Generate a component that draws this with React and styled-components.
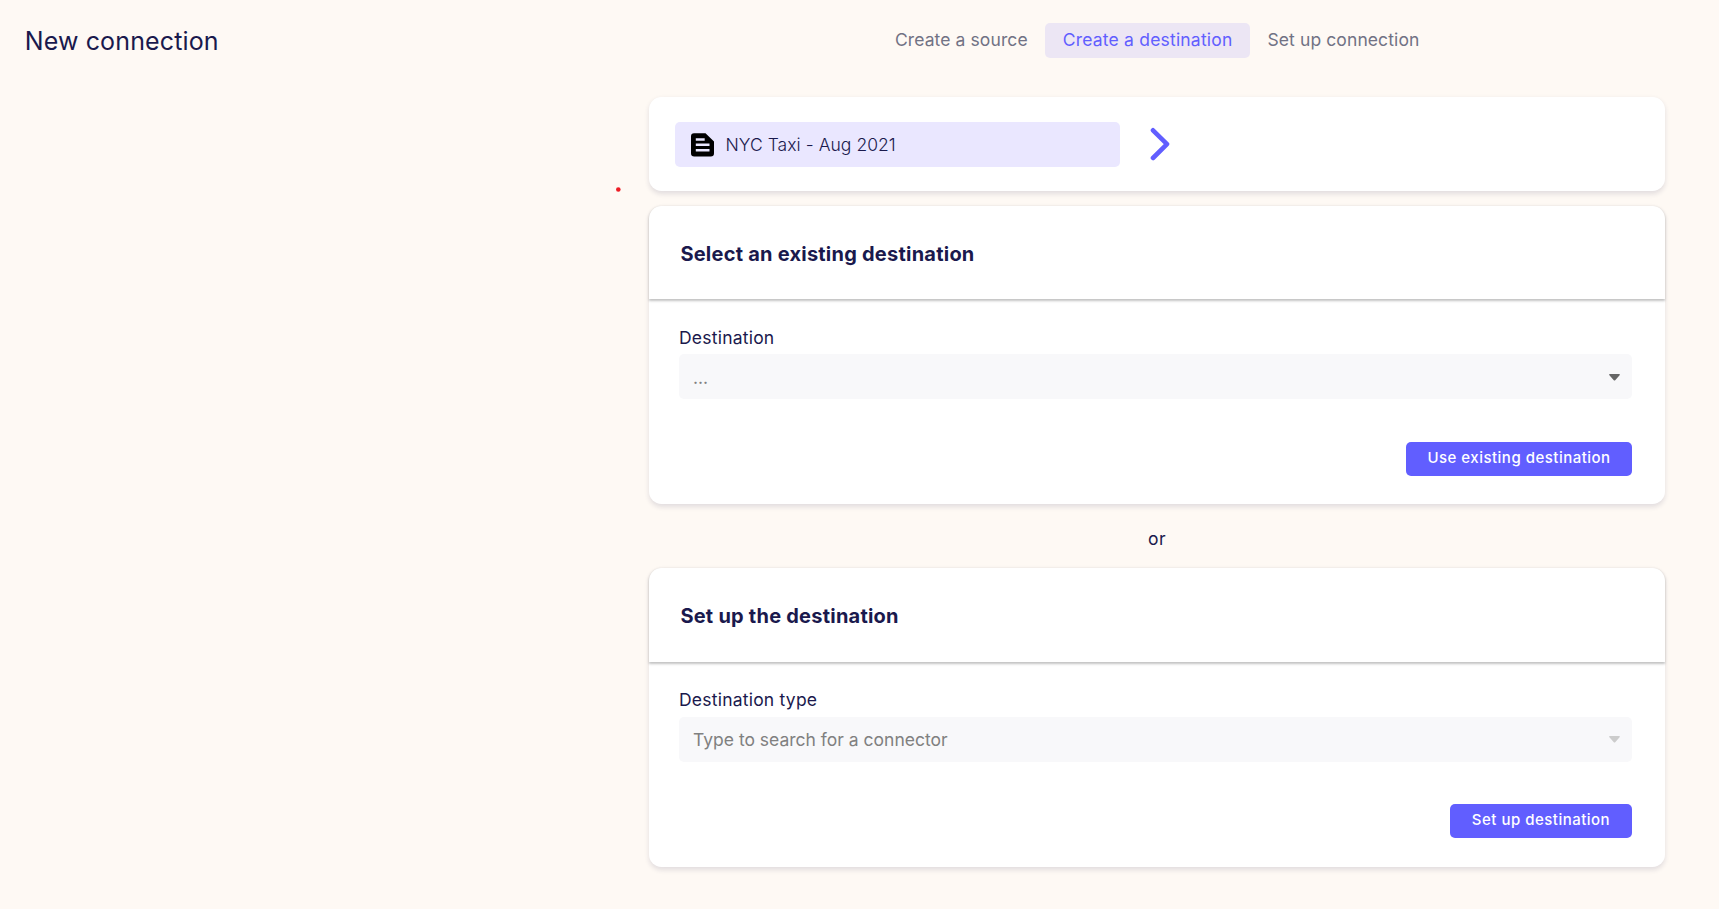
import React from "react";
import styled, { createGlobalStyle } from "styled-components";

const GlobalStyle = createGlobalStyle`
  * { box-sizing: border-box; }
  body {
    margin: 0;
    background: #fef9f4;
    color: #1a194d;
    font-family: Inter, "Liberation Sans", sans-serif;
    font-size: 17.5px;
  }
`;

const Page = styled.div`
  position: relative;
  height: 909px;
  overflow: hidden;
  display: flex;
  flex-direction: column;
`;

const Header = styled.header`
  display: flex;
  align-items: flex-start;
  height: 97px;
  padding-top: 23px;
  padding-left: 24.7px;
`;

const Title = styled.h1`
  width: 624.3px;
  margin: 2px 0 0;
  font-size: 25px;
  line-height: 32px;
  font-weight: 400;
  letter-spacing: 0.14px;
`;

const Steps = styled.nav`
  width: 1016px;
  display: flex;
  justify-content: center;
`;

const Step = styled.div`
  height: 35px;
  padding: 0 17.3px 0 17.7px;
  border-radius: 5px;
  line-height: 34px;
  white-space: nowrap;
  letter-spacing: ${(p) => (p.$active ? 0.2 : 0.1)}px;
  color: ${(p) => (p.$active ? "#615eff" : "#717284")};
  background: ${(p) => (p.$active ? "#ece6f4" : "transparent")};
`;

const Content = styled.main`
  width: 1016px;
  margin-left: 649px;
  display: flex;
  flex-direction: column;
`;

const Card = styled.section`
  height: 298.4px;
  background: #fff;
  border-radius: 12.5px;
  box-shadow: 0 2.5px 5px rgba(26, 25, 77, 0.12);
`;

const SourceCard = styled(Card)`
  display: flex;
  align-items: center;
  height: 94px;
  padding: 1px 26px 0;
  margin-bottom: 14.8px;
`;

const SourceItem = styled.div`
  display: flex;
  align-items: center;
  width: 445px;
  height: 45px;
  padding-left: 12px;
  gap: 8.5px;
  border-radius: 5px;
  background: #eae7ff;
  font-weight: 300;
  letter-spacing: 0.05px;
`;

const Chevron = styled.svg`
  margin-left: 30px;
  margin-top: -1px;
`;

const CardHeader = styled.div`
  height: 93.4px;
  padding: 2.4px 0 0 31.4px;
  display: flex;
  align-items: center;
  border-radius: 12.5px 12.5px 0 0;
  box-shadow: 0 1.25px 2.5px rgba(0, 0, 0, 0.24);
`;

const CardTitle = styled.h2`
  margin: 0;
  font-size: 20px;
  line-height: 24px;
  font-weight: 650;
  letter-spacing: 0.23px;
`;

const CardBody = styled.div`
  display: flex;
  flex-direction: column;
  padding: 27.6px 33px 0 30px;
`;

const Label = styled.label`
  line-height: 22px;
  margin-bottom: 5.4px;
  letter-spacing: 0.22px;
`;

const Select = styled.div`
  display: flex;
  align-items: center;
  justify-content: space-between;
  height: 45px;
  padding: 1.6px 12px 0 14px;
  border-radius: 5px;
  background: #f8f8fa;
  color: #808080;
`;

const Button = styled.button`
  align-self: flex-end;
  height: 34px;
  width: ${(p) => p.$width}px;
  margin: 42.8px 0 0;
  padding: 0 0 2.8px;
  border: 0;
  border-radius: 5px;
  background: #615eff;
  color: #fff;
  font-family: inherit;
  font-size: 15px;
  font-weight: 500;
  letter-spacing: 0.49px;
  white-space: nowrap;
`;

const Divider = styled.div`
  height: 64px;
  line-height: 70px;
  text-align: center;
  letter-spacing: 0.4px;
`;

const Marker = styled.svg`
  position: absolute;
  left: 616px;
  top: 187px;
`;

const DocumentIcon = () => (
  <svg width="30" height="30" viewBox="0 0 30 30">
    <path
      fillRule="evenodd"
      d="M7 3.3H18.5L27 11.5V23.3A3.2 3.2 0 0 1 23.8 26.5H7.2A3.2 3.2 0 0 1 4 23.3V6.3A3 3 0 0 1 7 3.3ZM8.8 8.3V10.7H17.7V8.3ZM8.8 13.6V16H22.5V13.6ZM8.8 18.9V21.4H22.5V18.9Z"
    />
  </svg>
);

const Caret = ({ color }) => (
  <svg width="11" height="7" viewBox="0 0 11 7">
    <path d="M0.8 0H10.2Q11.3 0.2 10.6 1.3L6.2 6.2Q5.5 7 4.8 6.2L0.4 1.3Q-0.3 0.2 0.8 0Z" fill={color} />
  </svg>
);

function DestinationCard({ title, label, placeholder, caretColor, action, buttonWidth }) {
  return (
    <Card>
      <CardHeader>
        <CardTitle>{title}</CardTitle>
      </CardHeader>
      <CardBody>
        <Label>{label}</Label>
        <Select>
          <span>{placeholder}</span>
          <Caret color={caretColor} />
        </Select>
        <Button $width={buttonWidth}>{action}</Button>
      </CardBody>
    </Card>
  );
}

export default function App() {
  return (
    <Page>
      <GlobalStyle />
      <Header>
        <Title>New connection</Title>
        <Steps>
          <Step>Create a source</Step>
          <Step $active>Create a destination</Step>
          <Step>Set up connection</Step>
        </Steps>
      </Header>
      <Content>
        <SourceCard>
          <SourceItem>
            <DocumentIcon />
            <span>NYC Taxi - Aug 2021</span>
          </SourceItem>
          <Chevron width="21" height="34" viewBox="0 0 21 34" fill="none">
            <path d="M3 3.3L17 17.1L3 31" stroke="#615eff" strokeWidth="4.6" strokeLinecap="round" strokeLinejoin="round" />
          </Chevron>
        </SourceCard>
        <DestinationCard
          title="Select an existing destination"
          label="Destination"
          placeholder="..."
          caretColor="#666"
          action="Use existing destination"
          buttonWidth={226}
        />
        <Divider>or</Divider>
        <DestinationCard
          title="Set up the destination"
          label="Destination type"
          placeholder="Type to search for a connector"
          caretColor="#ccc"
          action="Set up destination"
          buttonWidth={182}
        />
      </Content>
      <Marker width="5" height="5" viewBox="0 0 5 5">
        <circle cx="2.3" cy="2.5" r="2.3" fill="#ed1c24" />
      </Marker>
    </Page>
  );
}
